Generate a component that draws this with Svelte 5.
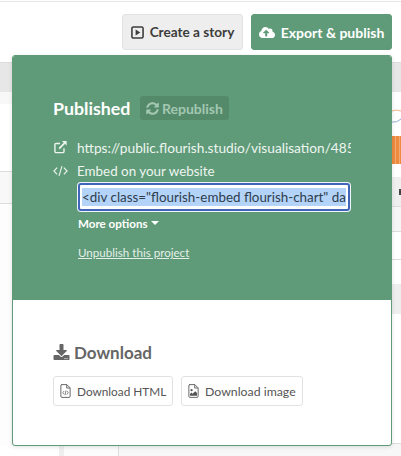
<script lang="ts">
  const leftRows = ['band', 'tint', 'gap-a', 'soft', 'rest']
  const rightRows = ['band', 'chart', 'orange', 'gap-b', 'grey', 'line-a', 'line-b', 'grey2', 'gap-c', 'line-c', 'foot-r']
  const url = 'https://public.flourish.studio/visualisation/4852167/'
  const embed = '<div class="flourish-embed flourish-chart" data-src="visualisation/4852167">'
</script>

<div class="page">
  <header class="toolbar">
    <button class="btn story">
      <svg class="ic" viewBox="0 0 14 14" aria-hidden="true">
        <rect x="1" y="1" width="12" height="12" rx="1.6" fill="none" stroke="currentColor" stroke-width="1.7" />
        <path d="M5 3.8L10 7L5 10.2Z" fill="currentColor" />
      </svg>
      Create a story
    </button>
    <button class="btn export">
      <svg class="ic cloud" viewBox="0 0 640 512" aria-hidden="true">
        <path fill="currentColor" d="M537.6 226.6c4.1-10.7 6.4-22.4 6.4-34.6 0-53-43-96-96-96-19.7 0-38.1 6-53.3 16.2C367 64.2 315.3 32 256 32c-88.4 0-160 71.6-160 160 0 2.7.1 5.4.2 8.1C40.2 219.8 0 273.2 0 336c0 79.5 64.5 144 144 144h368c70.7 0 128-57.3 128-128 0-61.9-44-113.6-102.4-125.4zM393.4 288H328v112c0 8.8-7.2 16-16 16h-48c-8.8 0-16-7.2-16-16V288h-65.4c-14.3 0-21.4-17.2-11.3-27.3l105.4-105.4c6.2-6.2 16.4-6.2 22.6 0l105.4 105.4c10.1 10.1 2.9 27.3-11.3 27.3z" />
      </svg>
      Export &amp; publish
    </button>
  </header>

  <div class="backdrop">
    <div class="col left">
      {#each leftRows as r}<div class={r}></div>{/each}
      <div class="foot"><span></span></div>
    </div>
    <div class="col right">
      {#each rightRows as r}
        <div class={r}>
          {#if r === 'chart'}
            <svg class="trend" viewBox="0 0 201 44" aria-hidden="true">
              <path d="M192 19Q196 17 201 19" fill="none" stroke="#f0b48c" stroke-width="1" />
              <path d="M192 30Q197 31 201 27" fill="none" stroke="#8fb0d6" stroke-width="1" />
            </svg>
          {/if}
          {#if r === 'grey'}<i class="glyph"></i>{/if}
        </div>
      {/each}
    </div>
  </div>

  <section class="panel">
    <div class="green">
      <div class="title">
        <h2>Published</h2>
        <span class="chip">
          <svg viewBox="0 0 512 512" aria-hidden="true">
            <path fill="currentColor" d="M370.72 133.28C339.458 104.008 298.888 87.962 255.848 88c-77.458.068-144.328 53.178-162.791 126.85-1.344 5.363-6.122 9.15-11.651 9.15H24.103c-7.498 0-13.194-6.807-11.807-14.176C33.933 94.924 134.813 8 256 8c66.448 0 126.791 26.136 171.315 68.685L463.03 40.97C478.149 25.851 504 36.559 504 57.941V192c0 13.255-10.745 24-24 24H345.941c-21.382 0-32.09-25.851-16.971-40.971l41.75-41.749zM32 296h134.059c21.382 0 32.09 25.851 16.971 40.971l-41.75 41.75c31.262 29.273 71.835 45.319 114.876 45.28 77.418-.07 144.315-53.144 162.787-126.849 1.344-5.363 6.122-9.15 11.651-9.15h57.304c7.498 0 13.194 6.807 11.807 14.176C478.067 417.076 377.187 504 256 504c-66.448 0-126.791-26.136-171.315-68.685L48.97 471.03C33.851 486.149 8 475.441 8 454.059V320c0-13.255 10.745-24 24-24z" />
          </svg>
          Republish
        </span>
      </div>

      <div class="link-row">
        <svg class="row-ic" viewBox="0 0 16 16" aria-hidden="true">
          <path d="M12 9.5V13a1.4 1.4 0 0 1-1.4 1.4H3A1.4 1.4 0 0 1 1.6 13V5.4A1.4 1.4 0 0 1 3 4h4.5" fill="none" stroke="currentColor" stroke-width="1.6" />
          <path d="M6.5 9.8L12.6 3.6" stroke="currentColor" stroke-width="2" fill="none" />
          <path d="M9.6 1h5.4v5.4Z" fill="currentColor" />
        </svg>
        <span class="url">{url}</span>
      </div>

      <div class="link-row embed-row">
        <svg class="row-ic" viewBox="0 0 16 12" aria-hidden="true">
          <path d="M4.4 2.4L1 6l3.4 3.6M11.6 2.4L15 6l-3.4 3.6M9.6 .8L6.4 11.2" fill="none" stroke="currentColor" stroke-width="1.2" />
        </svg>
        <span>Embed on your website</span>
      </div>

      <div class="field"><span class="sel">{embed}</span></div>

      <div class="more">More options<span class="caret"></span></div>
      <a class="unpublish" href="#unpublish">Unpublish this project</a>
    </div>

    <div class="white">
      <h3>
        <svg viewBox="0 0 512 512" aria-hidden="true">
          <path fill="currentColor" d="M216 0h80c13.3 0 24 10.7 24 24v168h87.7c17.8 0 26.7 21.5 14.1 34.1L269.7 378.3c-7.5 7.5-19.8 7.5-27.3 0L90.1 226.1c-12.6-12.6-3.7-34.1 14.1-34.1H192V24c0-13.3 10.7-24 24-24zm296 376v112c0 13.3-10.7 24-24 24H24c-13.3 0-24-10.7-24-24V376c0-13.3 10.7-24 24-24h146.7l49 49c20.1 20.1 52.5 20.1 72.6 0l49-49H488c13.3 0 24 10.7 24 24zm-124 88c0-11-9-20-20-20s-20 9-20 20 9 20 20 20 20-9 20-20zm64 0c0-11-9-20-20-20s-20 9-20 20 9 20 20 20 20-9 20-20z" />
        </svg>
        Download
      </h3>
      <div class="dl-row">
        <button class="dl html">
          <svg viewBox="0 0 12 16" aria-hidden="true">
            <path d="M1.5 .7H7.6L11.3 4.4V14A1.3 1.3 0 0 1 10 15.3H2A1.3 1.3 0 0 1 .7 14V2A1.3 1.3 0 0 1 2 .7ZM7.4 .9V4.6H11" fill="none" stroke="currentColor" stroke-width="1" />
            <path d="M4.4 8L2.9 10L4.4 12M7.6 8L9.1 10L7.6 12M6.6 7.4L5.4 12.6" fill="none" stroke="currentColor" stroke-width=".8" />
          </svg>
          Download HTML
        </button>
        <button class="dl image">
          <svg viewBox="0 0 12 16" aria-hidden="true">
            <path d="M1.5 .7H7.6L11.3 4.4V14A1.3 1.3 0 0 1 10 15.3H2A1.3 1.3 0 0 1 .7 14V2A1.3 1.3 0 0 1 2 .7ZM7.4 .9V4.6H11" fill="none" stroke="currentColor" stroke-width="1" />
            <circle cx="3.8" cy="7" r="1.3" fill="currentColor" />
            <path d="M2 13.4V11.4L3.6 9.8L5 11.2L8 8.2L10 10.2V13.4Z" fill="currentColor" />
          </svg>
          Download image
        </button>
      </div>
    </div>
  </section>
</div>

<style>
  :global(body) {
    margin: 0;
    background: #fff;
  }

  .page {
    position: relative;
    width: 401px;
    height: 456px;
    overflow: hidden;
    font-family: Lato, "Noto Sans", sans-serif;
    color: #333;
  }

  /* ── Top bar ── */
  .toolbar {
    display: flex;
    justify-content: flex-end;
    gap: 8px;
    height: 62px;
    box-sizing: border-box;
    padding: 14px 9px 0 0;
    background: linear-gradient(#fff 1px, #e6e6e6 1px, #e6e6e6 2px, #fff 2px);
  }

  .btn {
    display: flex;
    align-items: center;
    justify-content: center;
    gap: 6px;
    height: 36px;
    box-sizing: border-box;
    border-radius: 3px;
    font: 700 14px Lato, sans-serif;
    padding: 0;
  }

  .story {
    width: 121px;
    font-size: 13.6px;
    background: #eee;
    border: 1px solid #e2e2e2;
    color: #3c3c3c;
  }

  .export {
    width: 141px;
    background: #5f9b78;
    border: 1px solid #5f9b78;
    color: #fff;
  }

  .ic { width: 13px; height: 13px; }
  .cloud { width: 16px; height: 13px; }

  /* ── Page behind the popover ── */
  .backdrop {
    display: grid;
    grid-template-columns: 200px 201px;
    height: 394px;
  }

  .col { display: flex; flex-direction: column; }
  .band { height: 30px; background: #e7e7e7; border-top: 1px solid #ddd; box-sizing: border-box; }
  .left .tint { height: 12px; background: #f8f8f8; }
  .left .gap-a { height: 67px; }
  .left .soft { height: 33px; background: #f8f8f8; border-top: 1px solid #ddd; border-bottom: 1px solid #ddd; box-sizing: border-box; }
  .left .rest { flex: 1; background: #fdfdfd; }

  .foot { height: 10px; margin-left: 59px; background: #f7f7f7; }
  .foot span {
    display: block;
    height: 10px;
    width: 60px;
    box-sizing: border-box;
    background: #fbfbfb;
    border-left: 5px solid #eee;
    border-right: 1px solid #ddd;
  }

  .right .chart { height: 44px; background: #fff; }
  .trend { display: block; width: 201px; height: 44px; }
  .right .orange {
    height: 28px;
    background: repeating-linear-gradient(90deg, #ed8b3f 0 3px, #f3ab73 3px 4px);
  }
  .right .gap-b { height: 13px; }
  .right .grey {
    display: flex;
    justify-content: flex-end;
    align-items: center;
    height: 30px;
    background: #efefef;
    border-bottom: 1px solid #ddd;
    box-sizing: border-box;
  }
  .glyph { width: 2px; height: 6px; background: #444; }
  .right .line-a { height: 25px; background: #f6f6f6; border-bottom: 1px solid #ddd; box-sizing: border-box; }
  .right .line-b { height: 27px; border-bottom: 1px solid #ddd; }
  .right .grey2 { height: 30px; background: #eee; margin-top: 24px; }
  .right .gap-c { flex: 1; }
  .right .line-c { height: 1px; background: #ddd; }
  .right .foot-r { height: 12px; background: #f7f7f7; }

  /* ── Popover ── */
  .panel {
    position: absolute;
    left: 12px;
    top: 55px;
    width: 380px;
    height: 391px;
    box-sizing: border-box;
    display: flex;
    flex-direction: column;
    background: #fff;
    border: 1px solid #5f9b78;
    border-radius: 3px;
    box-shadow: 0 1px 4px rgba(0, 0, 0, 0.12);
    overflow: hidden;
  }

  .green {
    height: 244px;
    flex-shrink: 0;
    box-sizing: border-box;
    padding: 40px 40px 0;
    background: #5f9b78;
    color: #fff;
  }

  .title {
    display: flex;
    align-items: center;
    gap: 9px;
    height: 24px;
  }

  h2 {
    margin: 0;
    width: 78px;
    white-space: nowrap;
    font-size: 17.8px;
    font-weight: 700;
    line-height: 24px;
  }

  .chip {
    display: flex;
    align-items: center;
    gap: 3px;
    width: 89px;
    height: 24px;
    box-sizing: border-box;
    padding-left: 6px;
    border-radius: 3px;
    background: #548a6a;
    color: #a3c7b2;
    font-size: 14px;
    font-weight: 700;
  }

  .chip svg { width: 13px; height: 13px; }

  .link-row {
    display: flex;
    align-items: center;
    gap: 9px;
    height: 24px;
    margin-top: 15px;
    width: 298px;
    font-size: 13.7px;
    color: #eef5f1;
  }

  .embed-row { margin-top: 0; font-size: 13.4px; }

  .row-ic { width: 15px; height: 14px; flex-shrink: 0; }

  .url {
    overflow: hidden;
    white-space: nowrap;
  }

  /* focused input with its text selected */
  .field {
    width: 272px;
    height: 28px;
    box-sizing: border-box;
    margin: 0 0 0 25px;
    padding: 3px 2px;
    background: #fff;
    border: 2px solid #3f66b9;
    box-shadow: 0 0 0 1px #f1f4fb;
    border-radius: 3px;
    overflow: hidden;
    white-space: nowrap;
    font-size: 13.4px;
    line-height: 18px;
    color: #2d3d4d;
  }

  .sel {
    display: block;
    overflow: hidden;
    background: #b4d3f8;
    height: 18px;
  }

  .more {
    display: flex;
    align-items: center;
    gap: 3px;
    margin: 3px 0 0 25px;
    height: 18px;
    font-size: 11.6px;
    font-weight: 700;
  }

  .caret {
    width: 0;
    height: 0;
    border-left: 4px solid transparent;
    border-right: 4px solid transparent;
    border-top: 4px solid #fff;
  }

  .unpublish {
    display: block;
    margin: 12px 0 0 25px;
    font-size: 11.6px;
    line-height: 18px;
    color: #e4efe9;
    text-decoration: underline;
  }

  .white {
    padding: 40px 40px 0;
  }

  h3 {
    display: flex;
    align-items: center;
    gap: 4px;
    margin: 0;
    height: 24px;
    font-size: 17px;
    font-weight: 700;
    color: #666;
  }

  h3 svg { width: 17px; height: 16px; }

  .dl-row {
    display: flex;
    gap: 8px;
    margin-top: 12px;
  }

  .dl {
    display: flex;
    align-items: center;
    justify-content: flex-start;
    gap: 6px;
    height: 30px;
    box-sizing: border-box;
    padding: 0 0 0 6px;
    background: #fff;
    border: 1px solid #e2e2e2;
    border-radius: 3px;
    font: 400 12.3px Lato, sans-serif;
    color: #555;
  }

  .html { width: 120px; font-size: 11.8px; }
  .image { width: 122px; }
  .dl svg { width: 11px; height: 14px; }
</style>
